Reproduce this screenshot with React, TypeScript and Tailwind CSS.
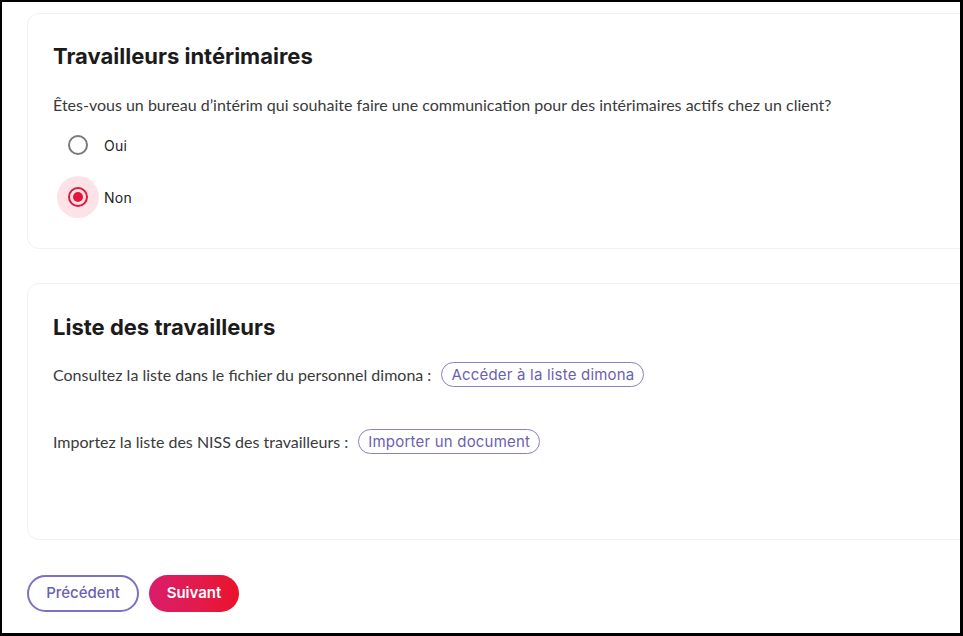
const HEAD = "font-['Inter','Noto_Sans',sans-serif]";
const BODY = "font-['Lato','Noto_Sans',sans-serif]";

function Radio({ label, checked }: { label: string; checked?: boolean }) {
  return (
    <label className="flex items-center gap-[5px]">
      <span className="flex h-[42px] w-[42px] items-center justify-center">
        {checked ? (
          <span className="flex h-[42px] w-[42px] items-center justify-center rounded-full bg-[#fde3e7]">
            <span className="flex h-[20px] w-[20px] items-center justify-center rounded-full border-2 border-[#e3153a]">
              <span className="h-[10px] w-[10px] rounded-full bg-[#e3153a]" />
            </span>
          </span>
        ) : (
          <span className="h-[20px] w-[20px] rounded-full border-2 border-[#7a7a7a]" />
        )}
      </span>
      <span className={`${HEAD} text-[14px] font-normal tracking-[0.3px] text-[#222]`}>{label}</span>
    </label>
  );
}

function PillLink({ children }: { children: React.ReactNode }) {
  return (
    <button className={`${HEAD} h-[25px] rounded-full border border-[#8a80c4] px-[9px] text-[15px] leading-[23px] tracking-[0.2px] text-[#6b5fb1]`}>
      {children}
    </button>
  );
}

export default function App() {
  return (
    <div className="h-[636px] w-[963px] overflow-hidden border-t-2 border-r-[3px] border-b-[3px] border-l-2 border-black bg-white">
      <div className="flex flex-col pl-[25px] pt-[11px]">
        <section className="h-[236px] w-[1000px] rounded-[12px] border border-[#f0f0f8] px-[25px] pt-[27px]">
          <h2 className={`${HEAD} text-[22px] leading-[30px] font-bold text-[#1b1b1b]`}>Travailleurs intérimaires</h2>
          <p className={`${BODY} mt-[22px] text-[16px] leading-[24px] text-[#3a3a3a]`}>
            Êtes-vous un bureau d’intérim qui souhaite faire une communication pour des intérimaires actifs chez un client?
          </p>
          <div className="ml-[4px] mt-[7px] flex flex-col gap-[10px]">
            <Radio label="Oui" />
            <Radio label="Non" checked />
          </div>
        </section>

        <section className="mt-[34px] h-[257px] w-[1000px] rounded-[12px] border border-[#f0f0f8] px-[25px] pt-[28px]">
          <h2 className={`${HEAD} text-[22px] leading-[30px] font-bold text-[#1b1b1b]`}>Liste des travailleurs</h2>
          <div className="mt-[20px] flex items-center gap-[10px]">
            <span className={`${BODY} text-[16px] leading-[24px] text-[#3a3a3a]`}>Consultez la liste dans le fichier du personnel dimona :</span>
            <PillLink>Accéder à la liste dimona</PillLink>
          </div>
          <div className="mt-[42px] flex items-center gap-[10px]">
            <span className={`${BODY} text-[16px] leading-[24px] text-[#3a3a3a]`}>Importez la liste des NISS des travailleurs :</span>
            <PillLink>Importer un document</PillLink>
          </div>
        </section>

        <div className="mt-[35px] flex gap-[10px]">
          <button className={`${HEAD} h-[37px] w-[112px] rounded-full border-2 border-[#7d72bf] text-[15px] font-medium text-[#6b5fb1]`}>
            Précédent
          </button>
          <button className={`${HEAD} h-[37px] w-[90px] rounded-full bg-gradient-to-r from-[#da1c6a] to-[#ea1228] text-[15px] font-semibold text-white`}>
            Suivant
          </button>
        </div>
      </div>
    </div>
  );
}
